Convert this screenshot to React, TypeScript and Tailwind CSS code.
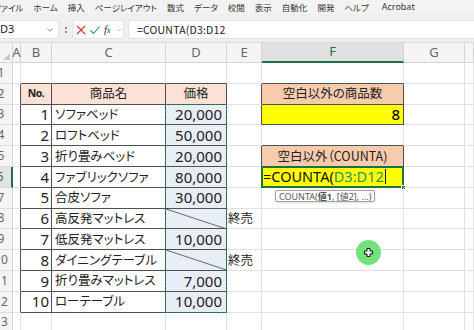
import { ChevronDown } from 'lucide-react';

type Item = { no: number; name: string; price: string | null; note?: string };

const items: Item[] = [
  { no: 1, name: 'ソファベッド', price: '20,000' },
  { no: 2, name: 'ロフトベッド', price: '50,000' },
  { no: 3, name: '折り畳みベッド', price: '20,000' },
  { no: 4, name: 'ファブリックソファ', price: '80,000' },
  { no: 5, name: '合皮ソファ', price: '30,000' },
  { no: 6, name: '高反発マットレス', price: null, note: '終売' },
  { no: 7, name: '低反発マットレス', price: '10,000' },
  { no: 8, name: 'ダイニングテーブル', price: null, note: '終売' },
  { no: 9, name: '折り畳みマットレス', price: '7,000' },
  { no: 10, name: 'ローテーブル', price: '10,000' },
];

const menu = ['ファイル', 'ホーム', '挿入', 'ページレイアウト', '数式', 'データ', '校閲', '表示', '自動化', '開発', 'ヘルプ', 'Acrobat'];
const cols = ['A', 'B', 'C', 'D', 'E', 'F', 'G', ''];

const font = "font-['Noto_Sans','Noto_Sans_CJK_JP',sans-serif]";
const jp = "font-['Noto_Sans_CJK_JP',sans-serif] [font-feature-settings:'palt']";

// border helpers: dark table line vs light gridline
const r = (dark: boolean) => (dark ? 'border-r-[#505050]' : 'border-r-[#e1e1e1]');
const b = (dark: boolean) => (dark ? 'border-b-[#505050]' : 'border-b-[#e1e1e1]');

function Diagonal() {
  return (
    <svg className="absolute inset-0 w-full h-full" preserveAspectRatio="none" viewBox="0 0 60 20">
      <line x1="0" y1="0" x2="60" y2="20" stroke="#444" strokeWidth="0.8" />
    </svg>
  );
}

function SheetRow({ row }: { row: number }) {
  const inTable = row >= 2 && row <= 12;
  const item = row >= 3 && row <= 12 ? items[row - 3] : null;
  const fBox = row === 2 || row === 3 || row === 5 || row === 6;
  const active = row === 6;
  const cell = 'relative flex items-center whitespace-nowrap border-r border-b';

  return (
    <>
      <div
        className={`flex justify-end items-center overflow-hidden border-b border-b-[#dcdcdc] ${
          active ? 'bg-[#e3e3e3] text-[#1e7145] border-r-2 border-r-[#1e7145]' : 'bg-[#f5f5f5] text-[#666] border-r border-r-[#d4d4d4]'
        }`}
      >
        <span className="w-[22px] shrink-0 text-center text-[12px]">{row}</span>
      </div>
      <div className={`${cell} ${r(inTable)} ${b(false)}`} />
      <div className={`${cell} ${r(inTable)} ${b(row <= 12)} ${row === 2 ? 'bg-[#fbe2d5] justify-center' : 'justify-end pr-[2px]'}`}>
        {row === 2 && <span className="text-[10.5px] font-bold tracking-tighter text-[#222]">No.</span>}
        {item && <span className="text-[15px] text-[#222]">{item.no}</span>}
      </div>
      <div className={`${cell} ${r(inTable)} ${b(row <= 12)} ${row === 2 ? 'bg-[#fbe2d5] justify-center' : 'pl-[3px]'}`}>
        {row === 2 && <span className={`${jp} text-[12.5px] text-[#222]`}>商品名</span>}
        {item && <span className={`${jp} text-[12.5px] text-[#222]`}>{item.name}</span>}
      </div>
      <div
        className={`${cell} ${r(inTable)} ${b(row <= 12)} ${
          row === 2 ? 'bg-[#fbe2d5] justify-center' : item ? 'bg-[#e8eef5] justify-end pr-[4px]' : ''
        }`}
      >
        {row === 2 && <span className={`${jp} text-[12.5px] text-[#222]`}>価格</span>}
        {item && item.price && <span className="text-[15px] text-[#222]">{item.price}</span>}
        {item && !item.price && <Diagonal />}
      </div>
      <div className={`${cell} ${r(fBox)} ${b(false)} pl-[1px]`}>
        {item && item.note && <span className={`${jp} text-[12.5px] text-[#222]`}>{item.note}</span>}
      </div>
      <div
        className={`${cell} ${r(fBox)} ${b(row <= 6)} ${
          row === 2 || row === 5 ? 'bg-[#f8cbad] justify-center' : row === 3 || row === 6 ? 'bg-[#ffff00]' : ''
        } ${row === 3 ? 'justify-end pr-[3px]' : ''}`}
      >
        {row === 2 && <span className={`${jp} text-[12.5px] text-[#222]`}>空白以外の商品数</span>}
        {row === 3 && <span className="text-[15px] font-medium text-[#111]">8</span>}
        {row === 5 && <span className={`${jp} text-[12.5px] text-[#222]`}>空白以外（COUNTA)</span>}
        {row === 6 && (
          <>
            <span className="pl-[1px] text-[14.5px] text-[#111]">
              =COUNTA(<span className="text-[#2f8f74]">D3:D12</span>
            </span>
            <span className="ml-[1px] w-px h-[15px] bg-[#111]" />
            <div className="absolute -left-px -top-px -right-px -bottom-px border-2 border-[#1e7145]" />
            <div className="absolute -right-[3px] -bottom-[3px] w-[5px] h-[5px] bg-[#1e7145] border border-white" />
          </>
        )}
      </div>
      <div className={`${cell} ${r(false)} ${b(false)}`} />
      <div className={`${cell} ${r(false)} ${b(false)}`} />
    </>
  );
}

export default function App() {
  return (
    <div className={`w-[474px] h-[330px] overflow-hidden bg-white text-[#222] ${font}`}>
      {/* menu tabs */}
      <div className={`h-[14px] bg-[#f3f3f3] flex items-center gap-[10px] -ml-[6px] text-[8.5px] text-[#333] whitespace-nowrap ${jp}`}>
        {menu.map((m) => (
          <span key={m} className={m === 'Acrobat' ? "ml-[3px] font-['Noto_Sans',sans-serif] text-[9px]" : ''}>
            {m}
          </span>
        ))}
      </div>

      {/* formula bar */}
      <div className="h-[29px] bg-[#efefef] flex items-start pt-[6px] border-b border-[#dadada]">
        <div className="w-[59px] h-[19px] bg-white rounded-r-[3px] flex items-center justify-between pr-[3px] border border-l-0 border-[#e3e3e3]">
          <span className="text-[11px] text-[#222]">D3</span>
          <ChevronDown size={10} strokeWidth={1.5} className="text-[#555]" />
        </div>
        <div className="w-[13px] h-[19px] flex flex-col items-center justify-center gap-[2px]">
          <span className="w-[2px] h-[2px] bg-[#666] rounded-full" />
          <span className="w-[2px] h-[2px] bg-[#666] rounded-full" />
        </div>
        <div className="w-[52px] h-[19px] bg-white rounded-[3px] border border-[#e3e3e3] flex items-center gap-[4px] pl-[3px]">
          <svg width="10" height="10" viewBox="0 0 10 10">
            <path d="M1 1 L9 9 M9 1 L1 9" stroke="#d13438" strokeWidth="1.1" />
          </svg>
          <svg width="10" height="10" viewBox="0 0 10 10">
            <path d="M0.5 5.5 L3.5 8.5 L9.5 1.5" stroke="#3a9a5c" strokeWidth="1.1" fill="none" />
          </svg>
          <span className="text-[11px] italic font-['Liberation_Serif',serif] text-[#333] leading-none">
            f<span className="text-[8px]">x</span>
          </span>
          <ChevronDown size={8} strokeWidth={1.5} className="text-[#999]" />
        </div>
        <div className="ml-[4px] flex-1 h-[19px] bg-white rounded-l-[3px] border border-r-0 border-[#e3e3e3] flex items-center pl-[8px]">
          <span className={`text-[10.5px] text-[#222] tracking-[0.2px] ${jp}`}>=COUNTA(D3:D12</span>
        </div>
      </div>

      {/* sheet */}
      <div className="relative grid grid-cols-[13px_8px_31px_114px_61px_35px_142px_61px_1fr] grid-rows-[20px_repeat(13,20.8px)]">
        <div className="bg-[#f5f5f5] border-r border-b border-[#d4d4d4] flex items-end justify-end p-[2px]">
          <span className="w-0 h-0 border-l-[7px] border-l-transparent border-b-[7px] border-b-[#c8c8c8]" />
        </div>
        {cols.map((c) => (
          <div
            key={c || 'H'}
            className={`flex items-center justify-center text-[13px] ${
              c === 'F'
                ? 'bg-[#e1e1e1] text-[#1e7145] border-b-2 border-b-[#1e7145] border-r border-r-[#d4d4d4]'
                : 'bg-[#f5f5f5] text-[#666] border-r border-b border-[#d4d4d4]'
            }`}
          >
            {c}
          </div>
        ))}
        {Array.from({ length: 13 }, (_, i) => (
          <SheetRow key={i} row={i + 1} />
        ))}

        {/* copy range marquee over D3:D12 */}
        <div className="absolute left-[165px] top-[61px] w-[62px] h-[209px] border-[1.5px] border-dashed border-[#2a7a68] pointer-events-none" />

        {/* function tooltip */}
        <div className="absolute left-[275px] top-[147px] h-[12px] px-[3px] flex items-center bg-white border border-[#a0a0a0] rounded-[2px] shadow-sm">
          <span className={`text-[9px] text-[#555] leading-none ${font}`}>COUNTA(<b className="font-bold">値1</b>, [値2], ...)</span>
        </div>

        {/* cursor highlight */}
        <div className="absolute left-[356px] top-[197px] w-[25px] h-[25px] rounded-full bg-[#74e27a] flex items-center justify-center">
          <svg width="9" height="9" viewBox="0 0 9 9">
            <path d="M3 0.5 H6 V3 H8.5 V6 H6 V8.5 H3 V6 H0.5 V3 H3 Z" fill="#fff" stroke="#111" strokeWidth="1" />
          </svg>
        </div>
      </div>
    </div>
  );
}
